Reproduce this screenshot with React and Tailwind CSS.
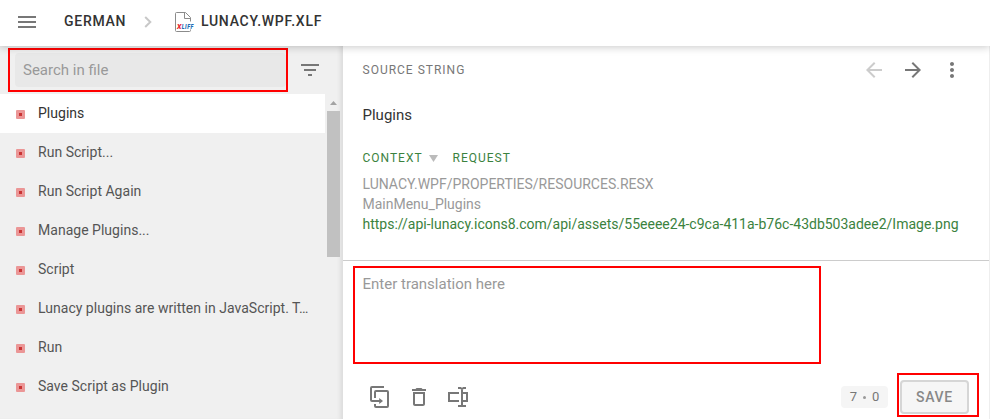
import React from "react";

const rows = [
  "Plugins",
  "Run Script...",
  "Run Script Again",
  "Manage Plugins...",
  "Script",
  "Lunacy plugins are written in JavaScript. T…",
  "Run",
  "Save Script as Plugin",
];

function Icon({ d, className }) {
  return (
    <svg viewBox="0 0 24 24" className={`block size-6 shrink-0 fill-current ${className ?? ""}`}>
      <path d={d} />
    </svg>
  );
}

function FileIcon() {
  return (
    <svg viewBox="0 0 20 22" className="ml-[23px] block h-[22px] w-5 shrink-0 overflow-visible">
      <path
        d="M15.5 10.5V6.5L10.5 1.5H1.5Q0.5 1.5 0.5 2.5V19.5Q0.5 20.5 1.5 20.5H14.5Q15.5 20.5 15.5 19.5V18.5M9.5 1.5V7.5H15.5"
        fill="none"
        stroke="#8b8b8b"
        strokeWidth="1"
      />
      <text x="2" y="18" fontFamily="Roboto, sans-serif" fontSize="8" fontWeight="900" fontStyle="italic" fill="#e8202c" textLength="5" lengthAdjust="spacingAndGlyphs">X</text>
      <text x="6.8" y="18" fontFamily="Roboto, sans-serif" fontSize="8" fontWeight="900" fontStyle="italic" fill="#1c6cb5" textLength="12" lengthAdjust="spacingAndGlyphs">LIFF</text>
    </svg>
  );
}

function Header() {
  return (
    <header className="relative z-10 flex h-[46px] shrink-0 items-center bg-white pb-[2px] pl-[15px] text-sm font-medium tracking-[0.72px] text-[#333] shadow-[0_1px_8px_rgba(0,0,0,0.22)]">
      <Icon d="M3 18h18v-2H3v2zm0-5h18v-2H3v2zm0-7v2h18V6H3z" className="text-[#777]" />
      <span className="mb-[2px] ml-[25px] w-[63px] whitespace-nowrap leading-5">GERMAN</span>
      <svg viewBox="0 0 8 12" className="ml-[17px] block h-3 w-2 shrink-0">
        <path d="M1.2 1L6.3 6L1.2 11" fill="none" stroke="#c8c8c8" strokeWidth="2" />
      </svg>
      <FileIcon />
      <span className="mb-[2px] ml-[6px] whitespace-nowrap leading-5">LUNACY.WPF.XLF</span>
    </header>
  );
}

function Sidebar() {
  return (
    <aside className="flex w-[343px] shrink-0 flex-col bg-[#f0f0f0] shadow-[inset_-5px_0_5px_-3px_rgba(0,0,0,0.1)]">
      <div className="flex h-12 shrink-0 items-start pl-[15px] pt-[7px]">
        <div className="relative h-[34px] w-[271px] rounded bg-[#e8e8e8] pl-2 text-[15px] leading-[34px] text-[#999]">
          Search in file
          <div className="absolute -left-[7px] -top-[5px] h-11 w-[280px] border-2 border-[#f00]" />
        </div>
        <Icon d="M10 18h4v-2h-4v2zM3 6v2h18V6H3zm3 7h12v-2H6v2z" className="ml-3 mt-[5px] text-[#777]" />
      </div>
      <div className="flex min-h-0 flex-1">
        <ul className="w-[325px]">
          {rows.map((row, i) => (
            <li
              key={row}
              className={`flex h-[39px] items-center pl-4 text-sm tracking-[0.02px] ${i === 0 ? "bg-white text-[#333]" : "text-[#555]"}`}
            >
              <span className="mt-[2px] flex size-[9px] shrink-0 items-center justify-center rounded-[1px] bg-[#eb9696]">
                <span className="size-[3px] bg-[#c93434]" />
              </span>
              <span className="mb-[2px] ml-[13px] whitespace-nowrap leading-5">{row}</span>
            </li>
          ))}
        </ul>
        <div className="ml-[2px] flex w-[13px] flex-col items-center">
          <svg viewBox="0 0 7 4" className="mt-[7px] block h-1 w-[7px] shrink-0">
            <path d="M0 4L3.5 0L7 4Z" fill="#a3a3a3" />
          </svg>
          <div className="mt-[6px] h-[146px] w-[13px] shrink-0 bg-[#c1c1c1]" />
        </div>
      </div>
    </aside>
  );
}

function Source() {
  return (
    <section className="h-[214px] shrink-0 pl-[19.5px]">
      <div className="flex h-12 items-center">
        <h2 className="w-[499.5px] text-xs leading-4 tracking-[1px] text-[#777]">SOURCE STRING</h2>
        <Icon d="M20 11H7.83l5.59-5.59L12 4l-8 8 8 8 1.41-1.41L7.83 13H20v-2z" className="text-[#ccc]" />
        <Icon d="M12 4l-1.41 1.41L16.17 11H4v2h12.17l-5.58 5.59L12 20l8-8z" className="ml-[15px] text-[#777]" />
        <Icon
          d="M12 8c1.1 0 2-.9 2-2s-.9-2-2-2-2 .9-2 2 .9 2 2 2zm0 2c-1.1 0-2 .9-2 2s.9 2 2 2 2-.9 2-2-.9-2-2-2zm0 6c-1.1 0-2 .9-2 2s.9 2 2 2 2-.9 2-2-.9-2-2-2z"
          className="ml-[15px] text-[#777]"
        />
      </div>
      <p className="mt-[11px] text-[15px] leading-5 text-[#333]">Plugins</p>
      <div className="mt-[25px] flex h-4 items-center text-xs leading-4 tracking-[1px] text-[#3b823e]">
        <span className="w-[66px]">CONTEXT</span>
        <svg viewBox="0 0 9 7" className="mt-px block h-[7px] w-[9px]">
          <path d="M0 0H9L4.5 7Z" fill="#bbb" />
        </svg>
        <span className="ml-[15px]">REQUEST</span>
      </div>
      <div className="mt-2 whitespace-nowrap text-sm leading-5 text-[#999]">
        <p>LUNACY.WPF/PROPERTIES/RESOURCES.RESX</p>
        <p>MainMenu_Plugins</p>
        <p className="text-[#3b823e]">https://api-lunacy.icons8.com/api/assets/55eeee24-c9ca-411a-b76c-43db503adee2/Image.png</p>
      </div>
    </section>
  );
}

function Translation() {
  return (
    <section className="flex min-h-0 flex-1 flex-col border-t border-[#ccc]">
      <div className="ml-[10px] mt-[5px] h-[98px] w-[468px] shrink-0 border-2 border-[#f00] pl-[7.5px] pt-[6px] text-[15px] leading-5 text-[#999]">
        Enter translation here
      </div>
      <div className="flex h-[55px] shrink-0 items-start pl-[25px] pt-[9px] text-[#777]">
        <svg viewBox="0 0 24 24" className="mt-3 block size-6 shrink-0">
          <path
            d="M16 2H4Q3 2 3 3V15Q3 16 4 16H12M7 13V7Q7 6 8 6H19Q20 6 20 7V21Q20 22 19 22H8Q7 22 7 21V19"
            fill="none"
            stroke="currentColor"
            strokeWidth="2"
          />
          <path d="M11.2 13L15 16L11.2 19Z" fill="currentColor" />
        </svg>
        <Icon d="M6 19c0 1.1.9 2 2 2h8c1.1 0 2-.9 2-2V7H6v12zM8 9h8v10H8V9zm7.5-5l-1-1h-5l-1 1H5v2h14V4z" className="ml-[15px] mt-3" />
        <svg viewBox="0 0 24 24" className="ml-[15px] mt-3 block size-6 shrink-0" fill="none" stroke="currentColor" strokeWidth="2">
          <path d="M13 8H3V16H13M16 3V21M12 3H14.5L16 4L17.5 3H20M12 21H14.5L16 20L17.5 21H20M17 8H21V16H17" />
        </svg>
        <div className="ml-[371px] mt-[13px] flex h-[22px] w-[47px] shrink-0 items-center justify-center gap-[6px] rounded-[4px] bg-[#f5f5f5] text-[13px]">
          <span>7</span>
          <span className="size-[3px] rounded-full bg-[#999]" />
          <span>0</span>
        </div>
        <div className="ml-[9px] flex h-11 w-[82px] shrink-0 items-start border-2 border-[#f00] pl-px pt-[5px]">
          <button className="h-[34px] w-[69px] rounded-[4px] border-2 border-[#d6d6d6] bg-[#f6f6f6] pb-px text-sm font-medium leading-[28px] tracking-[0.72px] text-[#888]">
            SAVE
          </button>
        </div>
      </div>
    </section>
  );
}

export default function App() {
  return (
    <div className="flex h-[419px] w-[990px] flex-col overflow-hidden bg-white font-['Roboto',sans-serif]">
      <Header />
      <div className="flex min-h-0 flex-1">
        <Sidebar />
        <main className="flex min-w-0 flex-1 flex-col border-r border-[#eee] bg-white">
          <Source />
          <Translation />
        </main>
      </div>
    </div>
  );
}
